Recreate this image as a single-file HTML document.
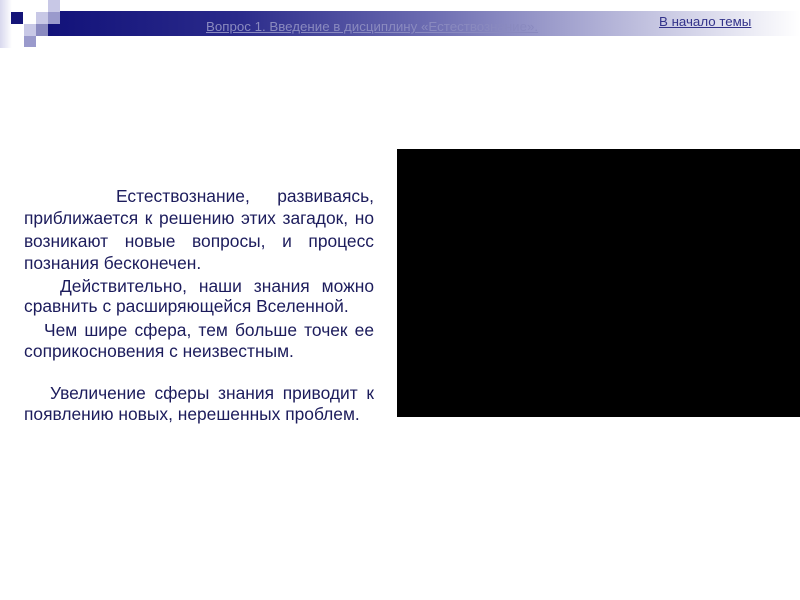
<!DOCTYPE html>
<html><head><meta charset="utf-8"><style>
body{margin:0;width:800px;height:600px;background:#fff;position:relative;overflow:hidden;font-family:"Liberation Sans",sans-serif}
.a{position:absolute}
.l{position:absolute;left:24px;width:350px;font-size:17.4px;color:#1c1c5c;white-space:nowrap;line-height:20px}
.j{text-align:justify;text-align-last:justify;white-space:normal}
</style></head><body>
<div class="a" style="left:0;top:0;width:12px;height:48px;background:linear-gradient(90deg,#d8d8ee,#fff)"></div>
<div class="a" style="left:48px;top:11px;width:752px;height:25px;background:linear-gradient(90deg,#12127a 0%,#2a2a8a 25%,#6a6ab0 50%,#b4b4d8 75%,#fff 100%)"></div>
<div class="a" style="left:11px;top:12px;width:12px;height:12px;background:#141478"></div>
<div class="a" style="left:36px;top:12px;width:12px;height:12px;background:#c8c8e6"></div>
<div class="a" style="left:48px;top:0;width:12px;height:12px;background:#c8c8e6"></div>
<div class="a" style="left:48px;top:12px;width:12px;height:12px;background:#9a9acc"></div>
<div class="a" style="left:24px;top:24px;width:12px;height:12px;background:#c8c8e6"></div>
<div class="a" style="left:36px;top:24px;width:12px;height:12px;background:#8a8ac0"></div>
<div class="a" style="left:24px;top:36px;width:12px;height:11px;background:#9a9acc"></div>
<div class="a" style="left:206px;top:19px;font-size:13.3px;color:#8a8abf;text-decoration:underline">Вопрос 1. Введение в дисциплину «Естествознание».</div>
<div class="a" style="left:659px;top:14px;font-size:13.3px;color:#33338a;text-decoration:underline">В начало темы</div>
<div class="a" style="left:397px;top:149px;width:403px;height:268px;background:#000"></div>
<div class="l j" style="top:186px;padding-left:92px;width:258px">Естествознание, развиваясь,</div>
<div class="l j" style="top:208px">приближается к решению этих загадок, но</div>
<div class="l j" style="top:231px">возникают новые вопросы, и процесс</div>
<div class="l" style="top:253px">познания бесконечен.</div>
<div class="l j" style="top:276px;padding-left:36px;width:314px">Действительно, наши знания можно</div>
<div class="l" style="top:296px">сравнить с расширяющейся Вселенной.</div>
<div class="l j" style="top:320px;padding-left:20px;width:330px">Чем шире сфера, тем больше точек ее</div>
<div class="l" style="top:341px">соприкосновения с неизвестным.</div>
<div class="l j" style="top:383px;padding-left:26px;width:324px">Увеличение сферы знания приводит к</div>
<div class="l" style="top:404px">появлению новых, нерешенных проблем.</div>
</body></html>
